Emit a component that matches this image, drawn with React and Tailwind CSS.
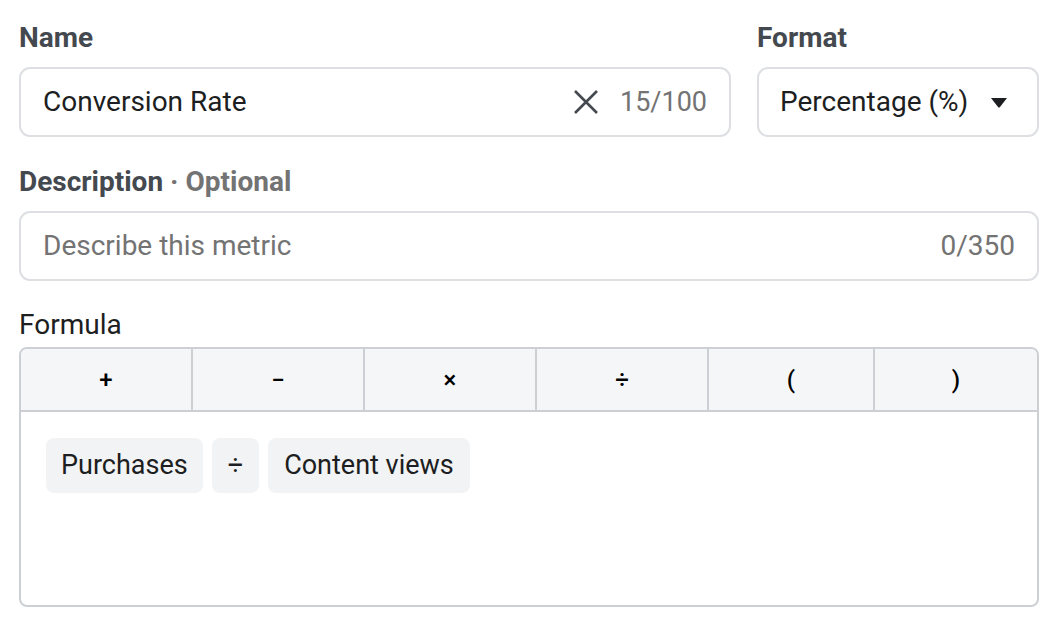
import React from 'react';

const font = { fontFamily: 'Roboto, "Liberation Sans", sans-serif' };

const operators = ['+', '−', '×', '÷', '(', ')'];

const Chip = ({ children, className = '' }) => (
  <div className={`flex items-center h-[55px] rounded-lg bg-[#f2f3f5] text-[27px] text-[#1c1e21] ${className}`}>
    {children}
  </div>
);

const App = () => {
  return (
    <div className="w-[1064px] h-[628px] bg-white pl-[19px] pr-[25px] pt-[23px]" style={font}>
      <div className="flex gap-[26px]">
        <div className="flex flex-col w-[712px]">
          <label className="h-[30px] leading-[30px] text-[28px] font-bold text-[#444950]">Name</label>
          <div className="mt-[14px] flex items-center h-[70px] rounded-[11px] border-2 border-[#dddfe2] pl-[22px] pr-[22px]">
            <span className="flex-1 text-[28px] text-[#1c1e21]">Conversion Rate</span>
            <svg width="26" height="26" viewBox="0 0 26 26" className="mr-[21px]">
              <path d="M2 2 L24 24 M24 2 L2 24" stroke="#444950" strokeWidth="2.6" fill="none" />
            </svg>
            <span className="text-[27px] text-[#737373]">15/100</span>
          </div>
        </div>
        <div className="flex flex-col flex-1">
          <label className="h-[30px] leading-[30px] text-[28px] font-bold text-[#444950]">Format</label>
          <div className="mt-[14px] flex items-center h-[70px] rounded-[11px] border-2 border-[#dddfe2] pl-[21px] pr-[29px]">
            <span className="flex-1 text-[28px] text-[#1c1e21]">Percentage (%)</span>
            <svg width="18" height="11" viewBox="0 0 18 11">
              <path d="M1 1 L17 1 L10 10 Q9 11 8 10 Z" fill="#1c1e21" />
            </svg>
          </div>
        </div>
      </div>

      <div className="mt-[30px] flex flex-col">
        <label className="h-[30px] leading-[30px] text-[28px] font-bold text-[#444950]">
          Description <span className="text-[#737373]">· Optional</span>
        </label>
        <div className="mt-[14px] flex items-center h-[70px] rounded-[11px] border-2 border-[#dddfe2] pl-[22px] pr-[22px]">
          <span className="flex-1 text-[28px] text-[#737373]">Describe this metric</span>
          <span className="text-[28px] text-[#737373]">0/350</span>
        </div>
      </div>

      <div className="mt-[29px] flex flex-col">
        <label className="h-[30px] leading-[30px] text-[28px] text-[#1c1e21]">Formula</label>
        <div className="mt-[7px] h-[260px] rounded-lg border-2 border-[#ccd0d5] overflow-hidden flex flex-col">
          <div className="grid grid-cols-[172px_172px_172px_172px_166px_1fr] h-[63px] bg-[#f5f6f7] border-b-2 border-[#ccd0d5]">
            {operators.map((op, i) => (
              <button
                key={op}
                className={`flex items-center justify-center text-[24px] font-medium text-black ${i < operators.length - 1 ? 'border-r-2 border-[#ccd0d5]' : ''}`}
              >
                {op}
              </button>
            ))}
          </div>
          <div className="flex gap-[9px] pl-[25px] pt-[26px]">
            <Chip className="px-[15px]">Purchases</Chip>
            <Chip className="px-[16px]">÷</Chip>
            <Chip className="px-[16px]">Content views</Chip>
          </div>
        </div>
      </div>
    </div>
  );
};

export default App;
